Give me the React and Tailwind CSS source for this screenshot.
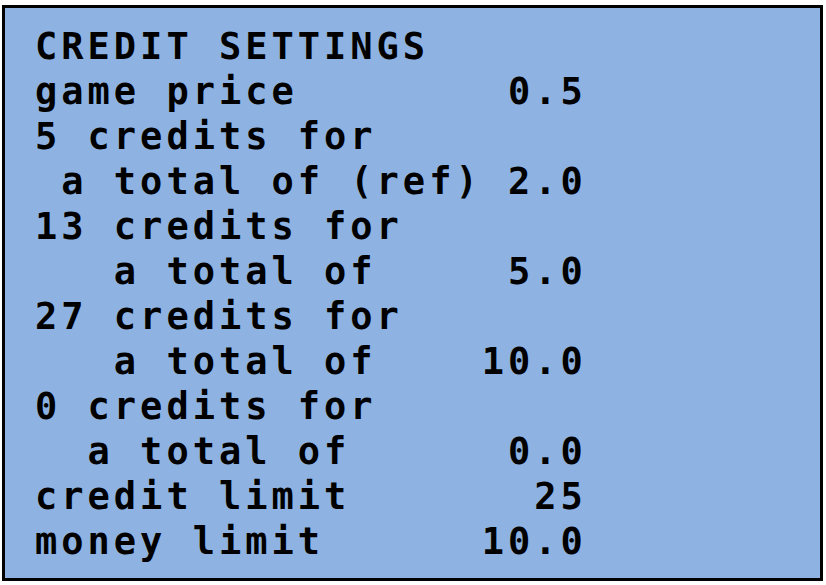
import React from 'react';

// service menu screen, fixed 21 column rows
const rows = [
  'CREDIT SETTINGS',
  'game price        0.5',
  '5 credits for',
  ' a total of (ref) 2.0',
  '13 credits for',
  '   a total of     5.0',
  '27 credits for',
  '   a total of    10.0',
  '0 credits for',
  '  a total of      0.0',
  'credit limit       25',
  'money limit      10.0',
];

export default function App() {
  return (
    <div className="w-[826px] h-[585px] bg-white overflow-hidden">
      <div className="ml-[2px] mt-[5px] w-[821px] h-[576px] border-[3px] border-black bg-[#8eb3e2] pl-[30px] pt-[16px]">
        <div className="font-['DejaVu_Sans_Mono',monospace] font-bold text-[37px] leading-[45px] tracking-[4px] text-black whitespace-pre">
          {rows.map((r, i) => (
            <div key={i}>{r}</div>
          ))}
        </div>
      </div>
    </div>
  );
}
